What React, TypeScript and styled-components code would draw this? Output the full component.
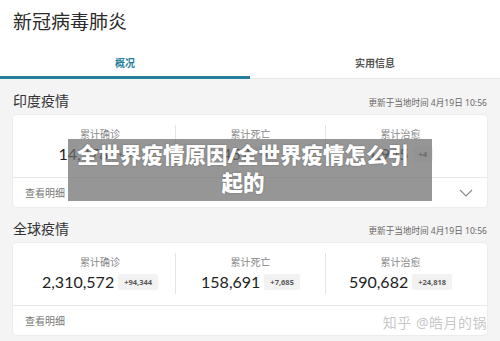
import React from 'react'
import styled, { createGlobalStyle } from 'styled-components'

const GlobalStyle = createGlobalStyle`
  body {
    margin: 0;
    background: #f4f4f4;
    font-family: "Noto Sans", "Noto Sans CJK SC", sans-serif;
  }
`

const Page = styled.div`
  position: relative;
  width: 500px;
  height: 341px;
  overflow: hidden;
  background: #f4f4f4;
`

const Header = styled.div`
  background: #fff;
  border-bottom: 1px solid #e6e6e6;
`

const Title = styled.div`
  padding: 7px 0 0 13px;
  height: 43px;
  font-size: 19px;
  line-height: 30px;
  color: #2b2b2b;
`

const Tabs = styled.div`
  display: flex;
`

const Tab = styled.div<{ active?: boolean }>`
  flex: 1;
  height: 29px;
  text-align: center;
  font-size: 10px;
  line-height: 26px;
  font-weight: 700;
  color: ${({ active }) => (active ? '#26809c' : '#555')};
  border-bottom: 3px solid ${({ active }) => (active ? '#26809c' : 'transparent')};
  box-sizing: border-box;
  margin-bottom: -1px;
`

const Section = styled.div`
  padding: 0 13px;
`

const SectionHead = styled.div`
  display: flex;
  align-items: flex-end;
  justify-content: space-between;
  height: 36px;
  padding-bottom: 4px;
  box-sizing: border-box;
`

const SectionTitle = styled.div`
  font-size: 14px;
  line-height: 20px;
  color: #333;
`

const UpdateTime = styled.div`
  font-size: 8.6px;
  line-height: 16px;
  color: #666;
`

const Card = styled.div`
  background: #fff;
  border-radius: 4px;
  box-shadow: 0 0 0 1px #ececec;
`

const Stats = styled.div`
  display: grid;
  grid-template-columns: 1fr 1fr 1fr;
  padding: 10px 12px 11px;
  border-bottom: 1px solid #e8e8e8;
`

const Stat = styled.div<{ divider?: boolean }>`
  display: flex;
  flex-direction: column;
  align-items: center;
  padding: 2px 0;
  border-left: ${({ divider }) => (divider ? '1px solid #e4e4e4' : 'none')};
`

const Label = styled.div`
  font-size: 10px;
  line-height: 14px;
  color: #888;
`

const ValueRow = styled.div`
  display: flex;
  align-items: center;
  gap: 4px;
  margin-top: 3px;
`

const Value = styled.div`
  font-family: Lato, "Noto Sans", sans-serif;
  font-size: 16px;
  line-height: 20px;
  color: #222;
`

const Badge = styled.div`
  background: #f2f2f2;
  color: #5a5a5a;
  font-size: 7.5px;
  font-weight: 700;
  padding: 0 6px;
  line-height: 16px;
  border-radius: 2px;
`

const Footer = styled.div`
  display: flex;
  align-items: center;
  justify-content: space-between;
  height: 29px;
  padding: 0 14px 0 12px;
  font-size: 10px;
  color: #777;
`

const Watermark = styled.div`
  position: absolute;
  right: 13px;
  bottom: 9px;
  font-size: 14px;
  color: rgba(150, 150, 150, 0.55);
  letter-spacing: 0.5px;
`

const Overlay = styled.div`
  position: absolute;
  left: 68px;
  top: 139px;
  width: 364px;
  height: 62px;
  background: rgba(110, 110, 110, 0.72);
  color: #fff;
  font-weight: 900;
  font-size: 21.5px;
  line-height: 28px;
  text-align: center;
  padding: 2px 22px 0 8px;
  box-sizing: border-box;
  text-shadow: 0 0 2px rgba(0, 0, 0, 0.3);
`

const Chevron = () => (
  <svg width="14" height="8" viewBox="0 0 14 8" fill="none">
    <path d="M1 1l6 6 6-6" stroke="#888" strokeWidth="1.1" />
  </svg>
)

type StatData = { label: string; value: string; delta: string }

function Block({ title, stats, chevron }: { title: string; stats: StatData[]; chevron?: boolean }) {
  return (
    <Section>
      <SectionHead>
        <SectionTitle>{title}</SectionTitle>
        <UpdateTime>更新于当地时间 4月19日 10:56</UpdateTime>
      </SectionHead>
      <Card>
        <Stats>
          {stats.map((s, i) => (
            <Stat key={s.label} divider={i > 0}>
              <Label>{s.label}</Label>
              <ValueRow>
                <Value>{s.value}</Value>
                <Badge>{s.delta}</Badge>
              </ValueRow>
            </Stat>
          ))}
        </Stats>
        <Footer>
          <span>查看明细</span>
          {chevron && <Chevron />}
        </Footer>
      </Card>
    </Section>
  )
}

export default function App() {
  return (
    <Page>
      <GlobalStyle />
      <Header>
        <Title>新冠病毒肺炎</Title>
        <Tabs>
          <Tab active>概况</Tab>
          <Tab>实用信息</Tab>
        </Tabs>
      </Header>
      <Block
        title="印度疫情"
        chevron
        stats={[
          { label: '累计确诊', value: '14,378', delta: '+991' },
          { label: '累计死亡', value: '457', delta: '+43' },
          { label: '累计治愈', value: '1,945', delta: '+4' },
        ]}
      />
      <Block
        title="全球疫情"
        stats={[
          { label: '累计确诊', value: '2,310,572', delta: '+94,344' },
          { label: '累计死亡', value: '158,691', delta: '+7,685' },
          { label: '累计治愈', value: '590,682', delta: '+24,818' },
        ]}
      />
      <Watermark>知乎 @皓月的锅</Watermark>
      <Overlay>全世界疫情原因/全世界疫情怎么引起的</Overlay>
    </Page>
  )
}
